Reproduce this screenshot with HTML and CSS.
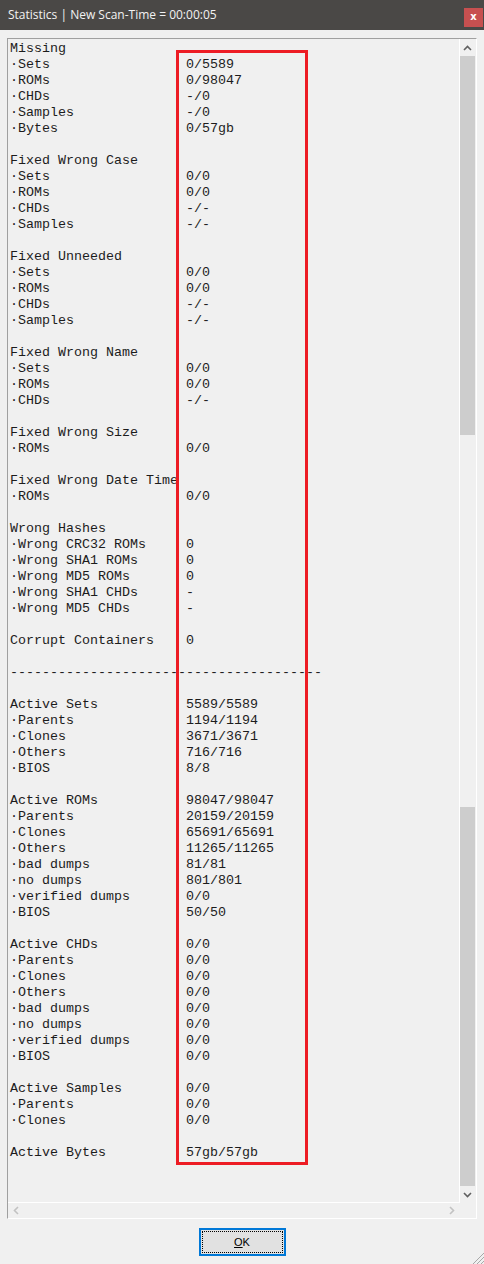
FILE: index.html
```html
<!DOCTYPE html>
<html lang="en">
<head>
    <meta charset="UTF-8">
    <meta name="viewport" content="width=device-width, initial-scale=1.0">
    <title>Statistics</title>
    <link rel="stylesheet" href="styles.css">
</head>
<body>
    <div class="window">
        <div class="titlebar">
            <span class="caption">Statistics | New Scan-Time = 00:00:05</span>
            <span class="close">x</span>
        </div>

        <div class="panel">
            <div class="text">
                <div class="group">
                    <div class="row">Missing</div>
                    <div class="row"><span class="key">·Sets</span><span>0/5589</span></div>
                    <div class="row"><span class="key">·ROMs</span><span>0/98047</span></div>
                    <div class="row"><span class="key">·CHDs</span><span>-/0</span></div>
                    <div class="row"><span class="key">·Samples</span><span>-/0</span></div>
                    <div class="row"><span class="key">·Bytes</span><span>0/57gb</span></div>
                </div>
                <div class="group">
                    <div class="row">Fixed Wrong Case</div>
                    <div class="row"><span class="key">·Sets</span><span>0/0</span></div>
                    <div class="row"><span class="key">·ROMs</span><span>0/0</span></div>
                    <div class="row"><span class="key">·CHDs</span><span>-/-</span></div>
                    <div class="row"><span class="key">·Samples</span><span>-/-</span></div>
                </div>
                <div class="group">
                    <div class="row">Fixed Unneeded</div>
                    <div class="row"><span class="key">·Sets</span><span>0/0</span></div>
                    <div class="row"><span class="key">·ROMs</span><span>0/0</span></div>
                    <div class="row"><span class="key">·CHDs</span><span>-/-</span></div>
                    <div class="row"><span class="key">·Samples</span><span>-/-</span></div>
                </div>
                <div class="group">
                    <div class="row">Fixed Wrong Name</div>
                    <div class="row"><span class="key">·Sets</span><span>0/0</span></div>
                    <div class="row"><span class="key">·ROMs</span><span>0/0</span></div>
                    <div class="row"><span class="key">·CHDs</span><span>-/-</span></div>
                </div>
                <div class="group">
                    <div class="row">Fixed Wrong Size</div>
                    <div class="row"><span class="key">·ROMs</span><span>0/0</span></div>
                </div>
                <div class="group">
                    <div class="row">Fixed Wrong Date Time</div>
                    <div class="row"><span class="key">·ROMs</span><span>0/0</span></div>
                </div>
                <div class="group">
                    <div class="row">Wrong Hashes</div>
                    <div class="row"><span class="key">·Wrong CRC32 ROMs</span><span>0</span></div>
                    <div class="row"><span class="key">·Wrong SHA1 ROMs</span><span>0</span></div>
                    <div class="row"><span class="key">·Wrong MD5 ROMs</span><span>0</span></div>
                    <div class="row"><span class="key">·Wrong SHA1 CHDs</span><span>-</span></div>
                    <div class="row"><span class="key">·Wrong MD5 CHDs</span><span>-</span></div>
                </div>
                <div class="group">
                    <div class="row"><span class="key">Corrupt Containers</span><span>0</span></div>
                </div>
                <div class="group">
                    <div class="row">---------------------------------------</div>
                </div>
                <div class="group">
                    <div class="row"><span class="key">Active Sets</span><span>5589/5589</span></div>
                    <div class="row"><span class="key">·Parents</span><span>1194/1194</span></div>
                    <div class="row"><span class="key">·Clones</span><span>3671/3671</span></div>
                    <div class="row"><span class="key">·Others</span><span>716/716</span></div>
                    <div class="row"><span class="key">·BIOS</span><span>8/8</span></div>
                </div>
                <div class="group">
                    <div class="row"><span class="key">Active ROMs</span><span>98047/98047</span></div>
                    <div class="row"><span class="key">·Parents</span><span>20159/20159</span></div>
                    <div class="row"><span class="key">·Clones</span><span>65691/65691</span></div>
                    <div class="row"><span class="key">·Others</span><span>11265/11265</span></div>
                    <div class="row"><span class="key">·bad dumps</span><span>81/81</span></div>
                    <div class="row"><span class="key">·no dumps</span><span>801/801</span></div>
                    <div class="row"><span class="key">·verified dumps</span><span>0/0</span></div>
                    <div class="row"><span class="key">·BIOS</span><span>50/50</span></div>
                </div>
                <div class="group">
                    <div class="row"><span class="key">Active CHDs</span><span>0/0</span></div>
                    <div class="row"><span class="key">·Parents</span><span>0/0</span></div>
                    <div class="row"><span class="key">·Clones</span><span>0/0</span></div>
                    <div class="row"><span class="key">·Others</span><span>0/0</span></div>
                    <div class="row"><span class="key">·bad dumps</span><span>0/0</span></div>
                    <div class="row"><span class="key">·no dumps</span><span>0/0</span></div>
                    <div class="row"><span class="key">·verified dumps</span><span>0/0</span></div>
                    <div class="row"><span class="key">·BIOS</span><span>0/0</span></div>
                </div>
                <div class="group">
                    <div class="row"><span class="key">Active Samples</span><span>0/0</span></div>
                    <div class="row"><span class="key">·Parents</span><span>0/0</span></div>
                    <div class="row"><span class="key">·Clones</span><span>0/0</span></div>
                </div>
                <div class="group">
                    <div class="row"><span class="key">Active Bytes</span><span>57gb/57gb</span></div>
                </div>

                <!-- highlight drawn over the value column -->
                <div class="marker"></div>
            </div>

            <div class="vscroll">
                <div class="arrow">
                    <svg width="9" height="6" viewBox="0 0 9 6"><path d="M1 5 L4.5 1.5 L8 5" fill="none" stroke="#606060" stroke-width="1.6"/></svg>
                </div>
                <div class="track">
                    <div class="thumb top"></div>
                    <div class="thumb bottom"></div>
                </div>
                <div class="arrow">
                    <svg width="9" height="6" viewBox="0 0 9 6"><path d="M1 1 L4.5 4.5 L8 1" fill="none" stroke="#606060" stroke-width="1.6"/></svg>
                </div>
            </div>

            <div class="hscroll">
                <svg width="6" height="9" viewBox="0 0 6 9"><path d="M5 1 L1.5 4.5 L5 8" fill="none" stroke="#c2c2c2" stroke-width="1.6"/></svg>
                <svg width="6" height="9" viewBox="0 0 6 9"><path d="M1 1 L4.5 4.5 L1 8" fill="none" stroke="#c2c2c2" stroke-width="1.6"/></svg>
            </div>
            <div class="corner"></div>
        </div>

        <div class="footer">
            <button class="ok"><span class="focus"><u>O</u>K</span></button>
            <svg class="grip" width="12" height="12" viewBox="0 0 12 12">
                <path d="M12 1 L1 12 M12 5 L5 12 M12 9 L9 12" stroke="#a8a8a8" stroke-width="1"/>
            </svg>
        </div>
    </div>
</body>
</html>
```

FILE: styles.css
```css
body {
    margin: 0;
    background-color: #f0f0f0;
}
.window {
    width: 484px;
    height: 1264px;
    position: relative;
    overflow: hidden;
}
.titlebar {
    height: 30px;
    background-color: #4a4846;
    display: flex;
    justify-content: space-between;
    align-items: center;
    padding-left: 8px;
    box-sizing: border-box;
}
.caption {
    color: #f2f2f2;
    font-family: "Open Sans", "Noto Sans", sans-serif;
    font-size: 12px;
    padding-bottom: 1px;
}
.close {
    align-self: flex-start;
    margin-top: 8px;
    margin-right: 1px;
    width: 19px;
    height: 19px;
    background-color: #c75050;
    color: #fff;
    font-family: "DejaVu Sans", sans-serif;
    font-weight: bold;
    font-size: 10px;
    line-height: 18px;
    text-align: center;
}
.panel {
    margin: 8px 0 0 7px;
    width: 470px;
    height: 1181px;
    box-sizing: border-box;
    border-left: 1px solid #a0a0a0;
    border-top: 1px solid #a0a0a0;
    border-right: 1px solid #fff;
    border-bottom: 1px solid #fff;
    display: grid;
    grid-template-columns: 452px 16px;
    grid-template-rows: 1164px 15px;
}
.text {
    position: relative;
    overflow: hidden;
    border-right: 1px solid #fff;
    border-bottom: 1px solid #fff;
    padding: 2px 0 0 2px;
    font-family: "Liberation Mono", "Courier New", monospace;
    font-size: 13.333px;
    line-height: 16px;
    color: #1c1c1c;
}
.group {
    margin-bottom: 16px;
}
.row {
    display: flex;
    height: 16px;
    white-space: pre;
}
.key {
    width: 176px;
    flex-shrink: 0;
}
.marker {
    position: absolute;
    left: 168px;
    top: 11px;
    width: 132px;
    height: 1115px;
    border: 3px solid #ed1c24;
    box-sizing: border-box;
}
.vscroll {
    display: flex;
    flex-direction: column;
    height: 1164px;
}
.vscroll .arrow {
    height: 17px;
    display: flex;
    align-items: center;
    justify-content: center;
    padding-right: 1px;
}
.track {
    flex: 1;
    display: flex;
    flex-direction: column;
    justify-content: space-between;
}
.thumb {
    width: 15px;
    height: 379px;
    background-color: #cdcdcd;
}
.hscroll {
    display: flex;
    justify-content: space-between;
    align-items: center;
    padding: 0 5px 0 5px;
}
.footer {
    height: 45px;
    display: flex;
    justify-content: center;
    align-items: flex-start;
    padding-top: 9px;
    box-sizing: border-box;
}
.ok {
    width: 87px;
    height: 28px;
    padding: 1px;
    border: 2px solid #0078d7;
    background-color: #e1e1e1;
    font-family: "Liberation Sans", Arial, sans-serif;
    font-size: 11px;
    color: #000;
}
.focus {
    display: flex;
    align-items: center;
    justify-content: center;
    height: 100%;
    border: 1px dotted #000;
    box-sizing: border-box;
}
.grip {
    position: absolute;
    right: 0;
    bottom: 0;
}
```
